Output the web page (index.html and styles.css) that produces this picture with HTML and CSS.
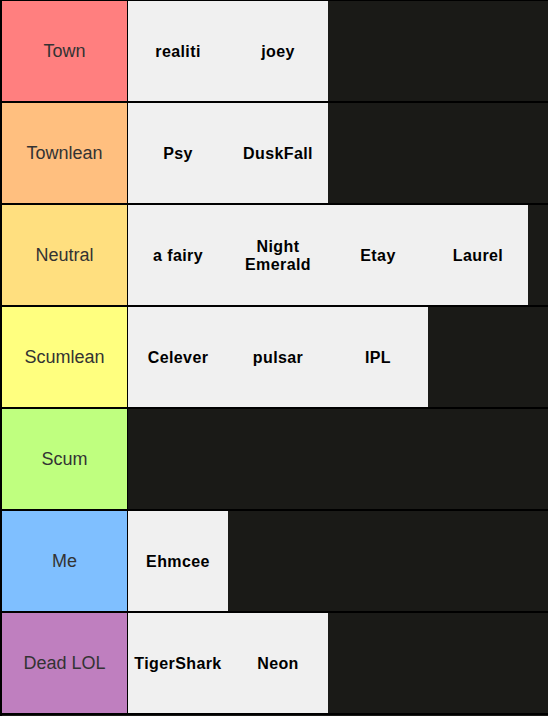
FILE: index.html
```html
<!DOCTYPE html>
<html>
<head>
<meta charset="utf-8">
<link rel="stylesheet" href="styles.css">
</head>
<body>
<div class="tiers">
  <div class="row">
    <div class="label t-town">Town</div>
    <div class="items"><div class="item">realiti</div><div class="item">joey</div></div>
  </div>
  <div class="row">
    <div class="label t-townlean">Townlean</div>
    <div class="items"><div class="item">Psy</div><div class="item">DuskFall</div></div>
  </div>
  <div class="row">
    <div class="label t-neutral">Neutral</div>
    <div class="items"><div class="item">a fairy</div><div class="item">Night Emerald</div><div class="item">Etay</div><div class="item">Laurel</div></div>
  </div>
  <div class="row">
    <div class="label t-scumlean">Scumlean</div>
    <div class="items"><div class="item">Celever</div><div class="item">pulsar</div><div class="item">IPL</div></div>
  </div>
  <div class="row">
    <div class="label t-scum">Scum</div>
    <div class="items"></div>
  </div>
  <div class="row">
    <div class="label t-me">Me</div>
    <div class="items"><div class="item">Ehmcee</div></div>
  </div>
  <div class="row">
    <div class="label t-dead">Dead LOL</div>
    <div class="items"><div class="item">TigerShark</div><div class="item">Neon</div></div>
  </div>
</div>
</body>
</html>
```

FILE: styles.css
```css
html, body {
  margin: 0;
  padding: 0;
  background: #000;
}
.tiers {
  width: 546px;
  height: 715px;
  border-top: 1px solid #000;
  border-left: 2px solid #000;
  background: #1a1a17;
  display: flex;
  flex-direction: column;
}
.row {
  display: flex;
  height: 100px;
  border-bottom: 2px solid #000;
}
.label {
  width: 125px;
  border-right: 1px solid #000;
  display: flex;
  align-items: center;
  justify-content: center;
  font-family: "Liberation Sans", Arial, sans-serif;
  font-size: 18px;
  color: #333;
}
.t-town { background: #ff7f7f; }
.t-townlean { background: #ffbf7f; }
.t-neutral { background: #ffdf7f; }
.t-scumlean { background: #ffff7f; }
.t-scum { background: #bfff7f; }
.t-me { background: #7fbfff; }
.t-dead { background: #bf7fbf; }
.items {
  display: flex;
  flex: 1;
  background: #1a1a17;
}
.item {
  width: 100px;
  height: 100px;
  background: #f0f0f0;
  display: flex;
  align-items: center;
  justify-content: center;
  text-align: center;
  font-family: "Liberation Sans", Arial, sans-serif;
  font-weight: bold;
  font-size: 16px;
  letter-spacing: 0.4px;
  line-height: 18px;
  color: #000;
  padding: 2px 8px 0;
  box-sizing: border-box;
}
```
